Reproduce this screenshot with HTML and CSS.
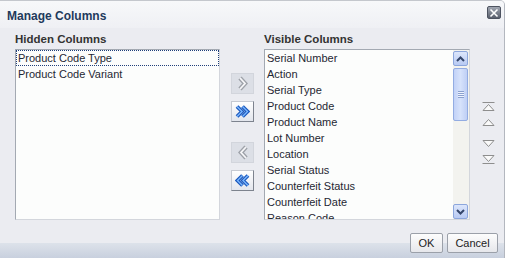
FILE: index.html
```html
<!DOCTYPE html>
<html>
<head>
    <title>Manage Columns</title>
    <link rel="stylesheet" href="styles.css">
</head>
<body>
    <div class="dialog">
        <div class="titlebar">
            <span class="title">Manage Columns</span>
            <button class="close" title="Close">
                <svg width="10" height="10" viewBox="0 0 10 10"><path d="M1.5 1.5 L8.5 8.5 M8.5 1.5 L1.5 8.5" stroke="#fff" stroke-width="1.6"/></svg>
            </button>
        </div>

        <div class="body">
            <div class="column hidden-col">
                <div class="label">Hidden Columns</div>
                <div class="list">
                    <div class="items">
                        <div class="item focused">Product Code Type</div>
                        <div class="item">Product Code Variant</div>
                    </div>
                </div>
            </div>

            <div class="shuttle">
                <div class="group">
                    <button class="shuttle-btn disabled" title="Move">
                        <svg width="12" height="15" viewBox="0 0 12 15"><polyline points="3,2 8,7.5 3,13" fill="none" stroke="#9ea2a9" stroke-width="4.4"/><polyline points="3,2 8,7.5 3,13" fill="none" stroke="#f6f6f8" stroke-width="1.8"/></svg>
                    </button>
                    <button class="shuttle-btn enabled" title="Move All">
                        <svg width="15" height="13" viewBox="0 0 15 13"><polyline points="2,1.5 7,6.5 2,11.5" fill="none" stroke="#1b58bd" stroke-width="3.8"/><polyline points="7.5,1.5 12.5,6.5 7.5,11.5" fill="none" stroke="#1b58bd" stroke-width="3.8"/><polyline points="2,1.5 7,6.5 2,11.5" fill="none" stroke="#7ab7ff" stroke-width="1.4"/><polyline points="7.5,1.5 12.5,6.5 7.5,11.5" fill="none" stroke="#7ab7ff" stroke-width="1.4"/></svg>
                    </button>
                </div>
                <div class="group">
                    <button class="shuttle-btn disabled" title="Remove">
                        <svg width="12" height="15" viewBox="0 0 12 15"><polyline points="9,2 4,7.5 9,13" fill="none" stroke="#9ea2a9" stroke-width="4.4"/><polyline points="9,2 4,7.5 9,13" fill="none" stroke="#f6f6f8" stroke-width="1.8"/></svg>
                    </button>
                    <button class="shuttle-btn enabled" title="Remove All">
                        <svg width="15" height="13" viewBox="0 0 15 13"><polyline points="7.5,1.5 2.5,6.5 7.5,11.5" fill="none" stroke="#1b58bd" stroke-width="3.8"/><polyline points="13,1.5 8,6.5 13,11.5" fill="none" stroke="#1b58bd" stroke-width="3.8"/><polyline points="7.5,1.5 2.5,6.5 7.5,11.5" fill="none" stroke="#7ab7ff" stroke-width="1.4"/><polyline points="13,1.5 8,6.5 13,11.5" fill="none" stroke="#7ab7ff" stroke-width="1.4"/></svg>
                    </button>
                </div>
            </div>

            <div class="column visible-col">
                <div class="label">Visible Columns</div>
                <div class="list">
                    <div class="items">
                        <div class="item">Serial Number</div>
                        <div class="item">Action</div>
                        <div class="item">Serial Type</div>
                        <div class="item">Product Code</div>
                        <div class="item">Product Name</div>
                        <div class="item">Lot Number</div>
                        <div class="item">Location</div>
                        <div class="item">Serial Status</div>
                        <div class="item">Counterfeit Status</div>
                        <div class="item">Counterfeit Date</div>
                        <div class="item">Reason Code</div>
                    </div>
                    <div class="scrollbar">
                        <div class="sb-btn">
                            <svg width="9" height="6" viewBox="0 0 9 6"><polyline points="1,5 4.5,1.5 8,5" fill="none" stroke="#34466b" stroke-width="2"/></svg>
                        </div>
                        <div class="thumb">
                            <div class="grip"></div>
                        </div>
                        <div class="sb-btn down">
                            <svg width="9" height="6" viewBox="0 0 9 6"><polyline points="1,1 4.5,4.5 8,1" fill="none" stroke="#34466b" stroke-width="2"/></svg>
                        </div>
                    </div>
                </div>
            </div>

            <div class="reorder">
                <svg class="r-top" width="13" height="9" viewBox="0 0 13 9"><line x1="0.5" y1="0.5" x2="12.5" y2="0.5" stroke="#8e8e8e"/><polygon points="6.5,2.5 12,8.5 1,8.5" fill="#fafafa" stroke="#8e8e8e"/></svg>
                <svg class="r-up" width="13" height="9" viewBox="0 0 13 9"><polygon points="6.5,2.5 12,8.5 1,8.5" fill="#fafafa" stroke="#8e8e8e"/></svg>
                <svg class="r-down" width="13" height="9" viewBox="0 0 13 9"><polygon points="1,0.5 12,0.5 6.5,6.5" fill="#fafafa" stroke="#8e8e8e"/></svg>
                <svg class="r-bottom" width="13" height="9" viewBox="0 0 13 9"><polygon points="1,0.5 12,0.5 6.5,6.5" fill="#fafafa" stroke="#8e8e8e"/><line x1="0.5" y1="8.5" x2="12.5" y2="8.5" stroke="#8e8e8e"/></svg>
            </div>
        </div>

        <div class="footer">
            <button class="btn ok">OK</button>
            <button class="btn cancel">Cancel</button>
        </div>
    </div>
</body>
</html>
```

FILE: styles.css
```css
body { margin: 0; background: #fff; font-family: "Liberation Sans", Arial, sans-serif; }

.dialog {
    width: 505px; height: 258px; box-sizing: border-box;
    background: #ebecf1;
    border-top: 1px solid #c4c7cd; border-right: 1px solid #b3b7bf;
    border-top-right-radius: 5px;
    display: flex; flex-direction: column; overflow: hidden;
}

/* title bar */
.titlebar {
    height: 27px; box-sizing: border-box;
    display: flex; align-items: flex-start;
    padding: 5px 3px 0 7px;
    background: linear-gradient(#f7f8fa, #eff0f4);
}
.title { margin-top: 2px; font-size: 12px; font-weight: bold; line-height: 16px; color: #1f3a5c; }
.close {
    margin-left: auto; width: 14px; height: 13px; padding: 0;
    display: flex; align-items: center; justify-content: center;
    background: linear-gradient(#a0a6b1, #5a606d);
    border: 1px solid #4d5360; border-radius: 2px;
}

/* body */
.body { display: flex; padding: 0 0 11px 15px; }
.column { display: flex; flex-direction: column; }
.hidden-col { width: 205px; }
.visible-col { width: 206px; margin-left: 10px; }
.label { margin-top: 3px; font-size: 11.5px; font-weight: bold; line-height: 16px; color: #333; }

.list {
    margin-top: 2px; height: 171px; box-sizing: border-box;
    border: 1px solid; border-color: #a3a9b2 #d3d6dc #d3d6dc #a3a9b2;
    background: #fcfdfc; display: flex;
}
.items { flex: 1; overflow: hidden; }
.item { height: 16px; line-height: 17px; padding-left: 2px; font-size: 11px; color: #1f2733; white-space: nowrap; }
.item.focused { outline: 1px dotted #203f7a; outline-offset: -1px; }

/* scrollbar */
.scrollbar {
    width: 16px; background: #f3f3ef;
    display: flex; flex-direction: column; align-items: flex-start;
}
.sb-btn {
    margin-top: 1px; width: 15px; height: 15px; box-sizing: border-box;
    display: flex; align-items: center; justify-content: center;
    border: 1px solid #8ca6dc; border-radius: 2px;
    background: linear-gradient(#dce6fb, #b8caf3);
}
.sb-btn.down { margin-top: auto; }
.thumb {
    margin-top: 2px; width: 15px; height: 53px; box-sizing: border-box;
    display: flex; align-items: center; justify-content: center;
    border: 1px solid #93ace2; border-radius: 2px;
    background: linear-gradient(to right, #c2d2f7, #d6e2fb, #bfcff5);
}
.grip {
    width: 6px; height: 7px;
    background: repeating-linear-gradient(#8aa0cf 0 1px, #eef3fe 1px 2px);
}

/* shuttle buttons */
.shuttle { width: 23px; margin-left: 11px; padding-top: 45px; display: flex; flex-direction: column; }
.group { display: flex; flex-direction: column; gap: 7px; }
.group + .group { margin-top: 20px; }
.shuttle-btn {
    width: 23px; height: 21px; box-sizing: border-box; padding: 0;
    display: flex; align-items: center; justify-content: center;
    border: 1px solid;
}
.shuttle-btn.disabled { background: #dcdfe6; border-color: #d2d5dc; }
.shuttle-btn.enabled {
    background: linear-gradient(#ffffff, #e3e6ed);
    border-color: #c6cad2 #7d838e #7d838e #c6cad2;
}

/* reorder icons */
.reorder { margin-left: 12px; padding-top: 74px; display: flex; flex-direction: column; }
.r-up { margin-top: 6px; }
.r-down { margin-top: 14px; }
.r-bottom { margin-top: 6px; }

/* footer */
.footer {
    flex: 1; display: flex; justify-content: flex-end; align-items: flex-start; gap: 4px;
    padding: 2px 6px 0 0;
    background: linear-gradient(#ebecf1 0 12px, #dde2ea 12px, #c8d0de 100%);
}
.btn {
    height: 20px; padding: 0;
    font-family: "Liberation Sans", Arial, sans-serif; font-size: 11px; color: #222;
    background: linear-gradient(#fdfdfd, #e6e7eb);
    border: 1px solid #9ba0a9; border-radius: 2px;
}
.ok { width: 33px; }
.cancel { width: 51px; }
```
